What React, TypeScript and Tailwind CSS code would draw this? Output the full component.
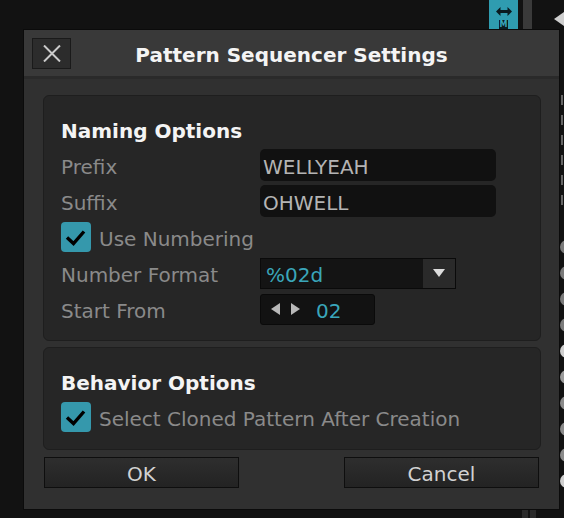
import React from "react";

const font = { fontFamily: '"DejaVu Sans", "Liberation Sans", sans-serif' };

function Check() {
  return (
    <div className="w-[30px] h-[30px] rounded-[4px] bg-[#3598ac] shrink-0 flex items-center justify-center">
      <svg width="30" height="30" viewBox="0 0 30 30">
        <path d="M6 15.5 L12.5 21.5 L23 9.5" fill="none" stroke="#000" strokeWidth="3.4" strokeLinecap="butt" strokeLinejoin="miter" />
      </svg>
    </div>
  );
}

function Row({ label, children }: { label: string; children: React.ReactNode }) {
  return (
    <div className="flex items-center h-[32px]">
      <div className="w-[199px] pt-[3px] text-[20px] leading-[24px] text-[#8a8a8a]">{label}</div>
      {children}
    </div>
  );
}

export default function App() {
  return (
    <div className="relative w-[564px] h-[518px] bg-[#121212] overflow-hidden" style={font}>
      {/* background app elements */}
      <div className="absolute left-[489px] top-0 w-[29px] h-[30px] bg-[#2f9cb0] flex flex-col items-center">
        <svg width="16" height="9" viewBox="0 0 16 9" className="mt-[7px]">
          <path d="M0 4.5 L4.5 0 L4.5 3 L11.5 3 L11.5 0 L16 4.5 L11.5 9 L11.5 6 L4.5 6 L4.5 9 Z" fill="#0a1a1f" />
        </svg>
        <div className="mt-[4px] w-[9px] h-[9px] bg-[#0b1c21] flex items-center justify-center">
          <span className="text-[8px] leading-[8px] font-bold text-[#3aa6ba]">M</span>
        </div>
      </div>
      <div className="absolute left-[523px] top-0 w-[9px] h-[30px] bg-[#3a3a3a]" />
      <svg className="absolute left-[554px] top-[12px]" width="10" height="14" viewBox="0 0 10 14">
        <path d="M0 7 L10 0 L10 14 Z" fill="#cfcfcf" />
      </svg>
      <div className="absolute left-[561px] top-[95px] flex flex-col gap-[10px]">
        {[0, 1, 2, 3, 4, 5].map((i) => (
          <div key={i} className="w-[2px] h-[10px] bg-[#666]" />
        ))}
      </div>
      <div className="absolute left-[560px] top-[240px] flex flex-col gap-[12px]">
        {["#7a7a7a", "#7a7a7a", "#7a7a7a", "#7a7a7a", "#cfcfcf", "#9a9a9a", "#8a8a8a", "#8a8a8a", "#8a8a8a", "#cfcfcf"].map((c, i) => (
          <div key={i} className="w-[14px] h-[14px] rounded-full" style={{ background: c }} />
        ))}
      </div>
      <div className="absolute left-[522px] top-[510px] w-[6px] h-[8px] bg-[#2a2a2a]" />
      <div className="absolute left-[530px] top-[510px] w-[6px] h-[8px] bg-[#2a2a2a]" />

      {/* dialog */}
      <div className="absolute left-[23px] top-[29px] w-[537px] h-[481px] border border-[#0b0b0b] bg-[#303030] flex flex-col">
        <div className="h-[46px] bg-[#393939] flex items-center">
          <div className="ml-[8px] mt-[1px] w-[39px] h-[31px] bg-[#2c2c2c] border border-[#1a1a1a] flex items-center justify-center">
            <svg width="18" height="17" viewBox="0 0 18 17">
              <path d="M1 0.5 L17 16.5 M17 0.5 L1 16.5" stroke="#cacaca" strokeWidth="2" />
            </svg>
          </div>
          <div className="flex-1 text-center text-[20px] leading-[24px] font-bold text-[#f4f4f4] pt-[4px]">
            Pattern Sequencer Settings
          </div>
          <div className="mr-[8px] w-[39px]" />
        </div>
        <div className="h-[3px] bg-[#2a2a2a]" />

        <div className="pt-[16px] pl-[19px] pr-[18px] flex flex-col gap-[6px]">
          <div className="rounded-[6px] bg-[#262626] border border-[#1e1e1e] pt-[23px] pb-[15px] pl-[17px] pr-[17px] flex flex-col">
            <div className="text-[20px] leading-[24px] font-bold text-[#f4f4f4]">Naming Options</div>
            <div className="mt-[6px] flex flex-col gap-[4px]">
              <Row label="Prefix">
                <div className="w-[236px] h-[32px] rounded-[5px] bg-[#111111] pl-[3px] pt-[3px] flex items-center text-[20px] leading-[24px] text-[#b4b4b4]">
                  WELLYEAH
                </div>
              </Row>
              <Row label="Suffix">
                <div className="w-[236px] h-[32px] rounded-[5px] bg-[#111111] pl-[3px] pt-[3px] flex items-center text-[20px] leading-[24px] text-[#b4b4b4]">
                  OHWELL
                </div>
              </Row>
              <div className="flex items-center h-[32px] gap-[8px]">
                <Check />
                <div className="pt-[3px] text-[20px] leading-[24px] text-[#8a8a8a]">Use Numbering</div>
              </div>
              <Row label="Number Format">
                <div className="w-[196px] h-[31px] border border-[#0a0a0a] bg-[#141414] flex">
                  <div className="flex-1 pl-[5px] pt-[3px] flex items-center text-[20px] leading-[24px] text-[#3aa6ba]">%02d</div>
                  <div className="w-[32px] h-full bg-[#2a2a2a] flex items-center justify-center">
                    <svg width="12" height="8" viewBox="0 0 12 8">
                      <path d="M0 0 L12 0 L6 8 Z" fill="#dcdcdc" />
                    </svg>
                  </div>
                </div>
              </Row>
              <Row label="Start From">
                <div className="w-[115px] h-[31px] rounded-[3px] border border-[#0a0a0a] bg-[#121212] flex items-center">
                  <svg className="ml-[10px]" width="9" height="12" viewBox="0 0 9 12">
                    <path d="M0 6 L9 0 L9 12 Z" fill="#b8b8b8" />
                  </svg>
                  <svg className="ml-[11px]" width="9" height="12" viewBox="0 0 9 12">
                    <path d="M9 6 L0 0 L0 12 Z" fill="#b8b8b8" />
                  </svg>
                  <div className="ml-[16px] pt-[3px] text-[20px] leading-[24px] text-[#3aa6ba]">02</div>
                </div>
              </Row>
            </div>
          </div>

          <div className="rounded-[6px] bg-[#262626] border border-[#1e1e1e] pt-[23px] pb-[17px] pl-[17px] pr-[17px] flex flex-col">
            <div className="text-[20px] leading-[24px] font-bold text-[#f4f4f4]">Behavior Options</div>
            <div className="mt-[7px] flex items-center gap-[8px]">
              <Check />
              <div className="pt-[3px] text-[20px] leading-[24px] text-[#8a8a8a]">Select Cloned Pattern After Creation</div>
            </div>
          </div>
        </div>

        <div className="mt-[7px] px-[20px] flex justify-between">
          <button className="w-[195px] h-[31px] pt-[3px] border border-[#0e0e0e] bg-gradient-to-b from-[#2e2e2e] to-[#232323] text-[20px] leading-[24px] text-[#d2d2d2]">
            OK
          </button>
          <button className="w-[195px] h-[31px] pt-[3px] border border-[#0e0e0e] bg-gradient-to-b from-[#2e2e2e] to-[#232323] text-[20px] leading-[24px] text-[#d2d2d2]">
            Cancel
          </button>
        </div>
      </div>
    </div>
  );
}
